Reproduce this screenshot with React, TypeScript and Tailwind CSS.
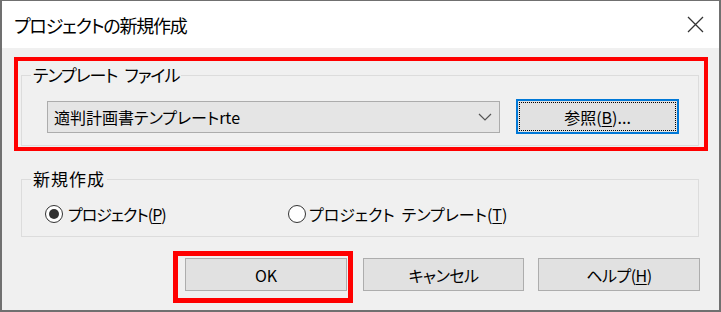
import React from "react";

const font = "[font-family:'Noto_Sans_CJK_JP',sans-serif] [font-feature-settings:'palt']";

function Radio({ checked }: { checked?: boolean }) {
  return (
    <span className="relative inline-flex w-[18px] h-[18px] shrink-0 rounded-full border border-[#333333] bg-white items-center justify-center">
      {checked && <span className="w-[10px] h-[10px] rounded-full bg-[#333333]" />}
    </span>
  );
}

export default function App() {
  return (
    <div className={`relative w-[721px] h-[312px] bg-[#f0f0f0] border-t border-x-2 border-b-2 border-[#707070] text-black ${font}`}>
      {/* title bar */}
      <div className="h-[47px] bg-white flex items-center justify-between pl-[12px] pr-[14px]">
        <span className="text-[18px] leading-none tracking-[-1.2px]">プロジェクトの新規作成</span>
        <svg width="17" height="17" viewBox="0 0 17 17" className="mr-[1px]">
          <path d="M1 1 L16 16 M16 1 L1 16" stroke="#333" strokeWidth="1.3" fill="none" />
        </svg>
      </div>

      <div className="flex flex-col pl-[19px]">
        {/* group 1 */}
        <fieldset className="mt-[17px] w-[678px] h-[81px] border border-[#dcdcdc] m-0 p-0">
          <legend className="ml-[9px] px-[2px] text-[17px] leading-[20px] tracking-[-1px]">
            テンプレート<span className="inline-block w-[7px]" />ファイル
          </legend>
          <div className="flex items-center pl-[25px] pt-[14px]">
            <div className="w-[453px] h-[32px] bg-[#e5e5e5] border border-[#acacac] flex items-center justify-between pl-[6px] pr-[7px]">
              <span className="text-[16px] leading-none">適判計画書テンプレートrte</span>
              <svg width="14" height="8" viewBox="0 0 14 8">
                <path d="M1 1 L7 7 L13 1" stroke="#555" strokeWidth="1.2" fill="none" />
              </svg>
            </div>
            <div className="ml-[16px] w-[163px] h-[35px] bg-[#e1e1e1] border-2 border-[#0078d7] p-[1px]">
              <div className="w-full h-full border border-dotted border-black flex items-center justify-center text-[16px] leading-none">
                参照(<span className="underline underline-offset-2">B</span>)...
              </div>
            </div>
          </div>
        </fieldset>

        {/* group 2 */}
        <fieldset className="mt-[23px] w-[678px] h-[68px] border border-[#dcdcdc] m-0 p-0">
          <legend className="ml-[9px] px-[2px] text-[17px] leading-[20px] tracking-[1px]">新規作成</legend>
          <div className="flex items-center h-[22px] mt-[14px] pl-[23px]">
            <Radio checked />
            <span className="ml-[5px] w-[220px] text-[16px] leading-none tracking-[-1px]">
              プロジェクト(<span className="underline underline-offset-2">P</span>)
            </span>
            <Radio />
            <span className="ml-[3px] text-[16px] leading-none">
              プロジェクト<span className="inline-block w-[7px]" />テンプレート(<span className="underline underline-offset-2">T</span>)
            </span>
          </div>
        </fieldset>

        {/* buttons */}
        <div className="flex mt-[21px] ml-[164px] gap-[15px] text-[16px] leading-none">
          <div className="w-[162px] h-[33px] bg-[#e1e1e1] border border-[#adadad] flex items-center justify-center">OK</div>
          <div className="ml-[1px] w-[161px] h-[33px] bg-[#e1e1e1] border border-[#adadad] flex items-center justify-center tracking-[-0.5px]">キャンセル</div>
          <div className="-ml-[1px] w-[162px] h-[33px] bg-[#e1e1e1] border border-[#adadad] flex items-center justify-center tracking-[-0.5px]">
            ヘルプ(<span className="underline underline-offset-2">H</span>)
          </div>
        </div>
      </div>

      {/* red annotation boxes */}
      <div className="absolute left-[12px] top-[56px] w-[694px] h-[94px] border-4 border-[#ff0000] pointer-events-none" />
      <div className="absolute left-[171px] top-[250px] w-[180px] h-[52px] border-[5px] border-[#ff0000] pointer-events-none" />
    </div>
  );
}
